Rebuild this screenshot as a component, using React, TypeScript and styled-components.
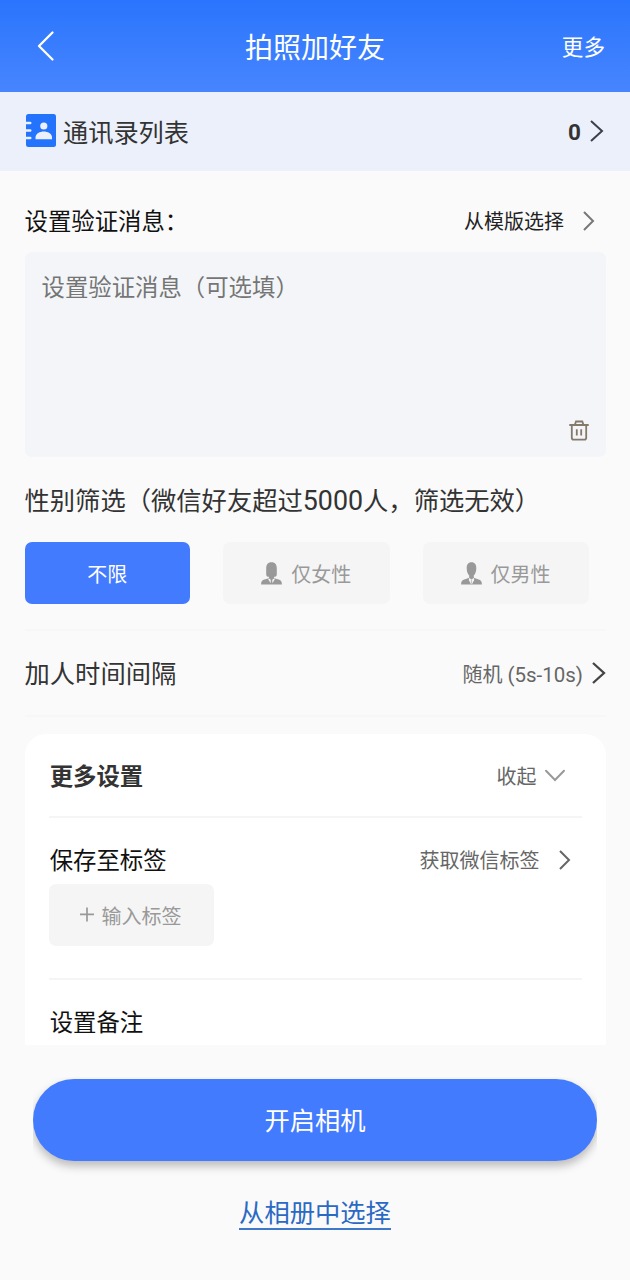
import React from "react";
import styled, { createGlobalStyle } from "styled-components";

const GlobalStyle = createGlobalStyle`
  * { box-sizing: border-box; }
  body {
    margin: 0;
    background: #fafafa;
    font-family: Roboto, "Noto Sans CJK SC", sans-serif;
    color: #333;
  }
  button, textarea { font: inherit; color: inherit; border: 0; padding: 0; margin: 0; background: none; }
  svg { display: block; flex: none; overflow: visible; }
`;

const Screen = styled.div`
  width: 630px;
  height: 1280px;
  display: flex;
  flex-direction: column;
  overflow: hidden;
  background: #fafafa;
`;

const Header = styled.header`
  flex: none;
  height: 92px;
  padding: 0 25px 0 37px;
  display: grid;
  grid-template-columns: 1fr auto 1fr;
  align-items: center;
  color: #fff;
  background: linear-gradient(#2a75fd, #4785fe);
`;

const Title = styled.h1`
  margin: 0 0 0 -12px;
  padding-top: 5px;
  font-size: 28px;
  font-weight: 400;
  line-height: 40px;
`;

const HeaderAction = styled.button`
  justify-self: end;
  padding-top: 3px;
  font-size: 21.6px;
  line-height: 32px;
`;

const ContactsBar = styled.div`
  flex: none;
  height: 79px;
  padding: 0 27px 1px 26px;
  display: flex;
  align-items: center;
  background: #ecf0fa;
  > svg:first-child { margin-bottom: 1px; }
`;

const ContactsLabel = styled.span`
  flex: 1;
  margin: 5px 0 0 7px;
  font-size: 25.2px;
  line-height: 36px;
`;

const Count = styled.span`
  margin: 1px 9px 0 0;
  font-size: 22.5px;
  font-weight: 700;
  line-height: 30px;
`;

const Content = styled.main`
  flex: none;
  height: 874px;
  padding: 0 24px 0 24.5px;
  display: flex;
  flex-direction: column;
  overflow: hidden;
`;

const Row = styled.div<{ $height: number; $top?: number; $end?: number }>`
  flex: none;
  height: ${(p) => p.$height}px;
  padding-top: ${(p) => p.$top ?? 0}px;
  padding-right: ${(p) => p.$end ?? 0}px;
  display: flex;
  align-items: center;
  justify-content: space-between;
`;

const Label = styled.span<{ $size?: number; $color?: string; $bold?: boolean }>`
  padding-top: 3px;
  font-size: ${(p) => p.$size ?? 23.4}px;
  font-weight: ${(p) => (p.$bold ? 700 : 400)};
  line-height: 34px;
  color: ${(p) => p.$color ?? "#111"};
  white-space: nowrap;
`;

const Latin = styled.span<{ $scale: number }>`
  font-size: ${(p) => p.$scale}em;
`;

const Caption = styled.span`
  padding-top: 3px;
  white-space: nowrap;
`;

const RowAction = styled.button<{ $gap: number; $color?: string }>`
  display: flex;
  align-items: center;
  gap: ${(p) => p.$gap}px;
  font-size: 20px;
  line-height: 30px;
  color: ${(p) => p.$color ?? "#666"};
`;

const MessageBox = styled.div`
  flex: none;
  height: 205px;
  padding: 19px 17px 16px;
  display: flex;
  flex-direction: column;
  border-radius: 7px;
  background: #f3f5f9;
`;

const MessageInput = styled.textarea`
  flex: 1;
  resize: none;
  outline: none;
  font-size: 23.4px;
  line-height: 34px;
  overflow: hidden;
  &::placeholder { color: #757575; opacity: 1; }
`;

const ClearButton = styled.button`
  align-self: flex-end;
`;

const Options = styled.div`
  flex: none;
  height: 62px;
  padding-right: 17.5px;
  display: grid;
  grid-template-columns: 165.5px 167px 166px;
  justify-content: space-between;
`;

const Option = styled.button<{ $active?: boolean }>`
  display: flex;
  align-items: center;
  justify-content: center;
  gap: 9px;
  border-radius: 7px;
  font-size: 20px;
  line-height: 30px;
  color: ${(p) => (p.$active ? "#fff" : "#999")};
  background: ${(p) => (p.$active ? "#437bff" : "#f5f5f5")};
`;

const Divider = styled.div<{ $top?: number; $color?: string }>`
  flex: none;
  height: 2px;
  margin-top: ${(p) => p.$top ?? 0}px;
  background: ${(p) => p.$color ?? "#f5f5f5"};
`;

const Card = styled.section`
  flex: none;
  height: 420px;
  margin-top: 17px;
  padding: 0 24.5px;
  border-radius: 21px;
  background: #fff;
`;

const CardLabel = styled(Label)`
  padding-left: 0.7px;
`;

const TagButton = styled.button`
  width: 165px;
  height: 62px;
  padding-right: 2px;
  display: flex;
  align-items: center;
  justify-content: center;
  gap: 8px;
  border-radius: 7px;
  font-size: 20px;
  line-height: 30px;
  color: #999;
  background: #f5f5f5;
`;

const Footer = styled.footer`
  flex: 1;
  padding: 34px 33px 0;
  display: flex;
  flex-direction: column;
  align-items: center;
`;

const ShadowClip = styled.div`
  width: 100%;
  clip-path: inset(-2px 0 -30px 0);
`;

const CameraButton = styled.button`
  display: block;
  width: 100%;
  height: 82px;
  padding-bottom: 2px;
  border-radius: 41px;
  font-size: 25.3px;
  color: #fff;
  background: #437bff;
  box-shadow: 0 5px 10px rgba(0, 0, 0, 0.26);
`;

const AlbumLink = styled.button`
  margin-top: 35px;
  height: 34px;
  font-size: 25.3px;
  line-height: 36px;
  color: #2a69c4;
  border-bottom: 2px solid #3f78c9;
`;

type ChevronProps = { width: number; height: number; color: string; stroke?: number };

const ChevronRight = ({ width, height, color, stroke = 2 }: ChevronProps) => (
  <svg width={width} height={height} fill="none" stroke={color} strokeWidth={stroke}>
    <path d={`M1 1L${width - 1} ${height / 2}L1 ${height - 1}`} />
  </svg>
);

const BackIcon = () => (
  <svg width="17" height="30" fill="none" stroke="#fff" strokeWidth="2.3" strokeLinecap="round" strokeLinejoin="round">
    <path d="M15.5 1.5L2 15L15.5 28.5" />
  </svg>
);

const ChevronDown = () => (
  <svg width="20" height="12" fill="none" stroke="#999" strokeWidth="2" strokeLinecap="round">
    <path d="M1 1.7L10 11L19 1.7" />
  </svg>
);

const ContactsIcon = () => (
  <svg width="30" height="33" viewBox="0 0 30 33">
    <rect width="30" height="33" rx="2.5" fill="#2373fc" />
    <path d="M0 9H4.2M0 16.5H4.2M0 24H4.2" stroke="#ecf0fa" strokeWidth="2.6" strokeLinecap="round" />
    <circle cx="17.8" cy="12" r="3.6" fill="#ecf0fa" />
    <path d="M9.5 25.3V23.5C9.5 19.5 14 17.5 17.8 17.5S26 19.5 26 23.5V25.3Z" fill="#ecf0fa" />
  </svg>
);

const TrashIcon = () => (
  <svg width="20" height="21" viewBox="0 0 20 21" fill="none" stroke="#85796a" strokeWidth="1.8">
    <path d="M.3 5H19.7M5.8 5L7 1.5H13.3L14.5 5M2.8 5V17.8Q2.8 19.7 4.6 19.7H15.4Q17.2 19.7 17.2 17.8V5" />
    <path d="M7.8 9.3V15.5M12.2 9.3V15.5" />
  </svg>
);

const FemaleIcon = () => (
  <svg width="21" height="23" viewBox="0 0 21 23">
    <path
      fill="#999"
      d="M10.5.3C6.6.3 5.2 3 5.2 6.5V12.5C5.2 14.2 6.3 14.8 7.9 14.8V16.2L2.6 17.8C.7 18.5.1 20 .1 22.5H20.9C20.9 20 20.3 18.5 18.4 17.8L13.1 16.2V14.8C14.7 14.8 15.8 14.2 15.8 12.5V6.5C15.8 3 14.4.3 10.5.3Z"
    />
    <path d="M7.7 16.3L9.7 17.8V21.2L7.3 17.6ZM13.3 16.3L11.3 17.8V21.2L13.7 17.6Z" fill="#f5f5f5" />
  </svg>
);

const MaleIcon = () => (
  <svg width="21" height="23" viewBox="0 0 21 23">
    <path
      fill="#999"
      d="M10.5.3C7.1.3 5.7 2.8 5.7 6.3C5.7 9.5 6.7 12 8.2 13.6V15.8L2.6 17.8C.7 18.5.1 20 .1 22.5H20.9C20.9 20 20.3 18.5 18.4 17.8L12.8 15.8V13.6C14.3 12 15.3 9.5 15.3 6.3C15.3 2.8 13.9.3 10.5.3Z"
    />
    <path d="M8 16L10.5 17.2L13 16L13.2 18L11.1 22H9.9L7.8 18Z" fill="#f5f5f5" />
    <path d="M9.7 17.2H11.3L10.9 18.7L11.3 21L10.5 22L9.7 21L10.1 18.7Z" fill="#c4c4c4" />
  </svg>
);

const PlusIcon = () => (
  <svg width="14" height="14" stroke="#999" strokeWidth="1.7">
    <path d="M0 6.4H14M7 -.6V13.4" />
  </svg>
);

export default function App() {
  return (
    <Screen>
      <GlobalStyle />
      <Header>
        <BackIcon />
        <Title>拍照加好友</Title>
        <HeaderAction>更多</HeaderAction>
      </Header>
      <ContactsBar>
        <ContactsIcon />
        <ContactsLabel>通讯录列表</ContactsLabel>
        <Count>0</Count>
        <ChevronRight width={13} height={22} color="#3b3f47" />
      </ContactsBar>
      <Content>
        <Row $height={81} $top={18} $end={12}>
          <Label>设置验证消息：</Label>
          <RowAction $gap={19} $color="#222">
            <Caption>从模版选择</Caption>
            <ChevronRight width={11} height={20} color="#777" />
          </RowAction>
        </Row>
        <MessageBox>
          <MessageInput placeholder="设置验证消息（可选填）" />
          <ClearButton aria-label="清空">
            <TrashIcon />
          </ClearButton>
        </MessageBox>
        <Row $height={85}>
          <Label $size={25.3} $color="#333">
            性别筛选（微信好友超过<Latin $scale={1.06}>5000</Latin>人，筛选无效）
          </Label>
        </Row>
        <Options>
          <Option $active>
            <Caption>不限</Caption>
          </Option>
          <Option>
            <FemaleIcon />
            <Caption>仅女性</Caption>
          </Option>
          <Option>
            <MaleIcon />
            <Caption>仅男性</Caption>
          </Option>
        </Options>
        <Divider $top={25} $color="#f7f7f7" />
        <Row $height={84} $end={1}>
          <Label $size={25.3} $color="#333">加人时间间隔</Label>
          <RowAction $gap={9}>
            <Caption>随机 <Latin $scale={1.025}>(5s-10s)</Latin></Caption>
            <ChevronRight width={13} height={22} color="#444" stroke={2.3} />
          </RowAction>
        </Row>
        <Divider $color="#f7f7f7" />
        <Card>
          <Row $height={82} $end={17}>
            <CardLabel $bold $color="#333">更多设置</CardLabel>
            <RowAction $gap={8}>
              <Caption>收起</Caption>
              <ChevronDown />
            </RowAction>
          </Row>
          <Divider />
          <Row $height={66} $top={17} $end={12}>
            <CardLabel>保存至标签</CardLabel>
            <RowAction $gap={19}>
              <Caption>获取微信标签</Caption>
              <ChevronRight width={11} height={20} color="#666" />
            </RowAction>
          </Row>
          <TagButton>
            <PlusIcon />
            <Caption>输入标签</Caption>
          </TagButton>
          <Divider $top={32} />
          <Row $height={82}>
            <CardLabel>设置备注</CardLabel>
          </Row>
        </Card>
      </Content>
      <Footer>
        <ShadowClip>
          <CameraButton>开启相机</CameraButton>
        </ShadowClip>
        <AlbumLink>从相册中选择</AlbumLink>
      </Footer>
    </Screen>
  );
}
